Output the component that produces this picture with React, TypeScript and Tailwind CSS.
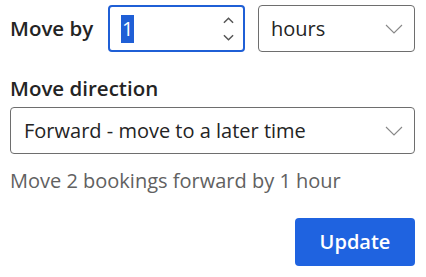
import { useState } from "react";

function Chevron({ className = "" }: { className?: string }) {
  return (
    <svg viewBox="0 0 18 10" className={className} fill="none" stroke="currentColor" strokeWidth="1.1">
      <path d="M1 1l8 8 8-8" />
    </svg>
  );
}

export default function App() {
  const [amount] = useState("1");
  return (
    <div className="w-[426px] h-[277px] bg-white text-[#242424] font-['Open_Sans',sans-serif] pl-[10px] pr-[11px] pt-[5px]">
      <div className="flex items-center">
        <span className="text-[20.5px] font-semibold w-[98px]">Move by</span>
        <div className="flex items-center w-[137px] h-[47px] rounded-[4px] border-2 border-[#1f5fd6] pl-[11px] pr-[9px]">
          <span className="bg-[#1f5fd6] text-white text-[20px] leading-[28px] px-[1px]">{amount}</span>
          <div className="ml-auto flex flex-col gap-[10px] text-[#555]">
            <svg viewBox="0 0 12 7" className="w-[11px] h-[7px]" fill="none" stroke="currentColor" strokeWidth="1.6"><path d="M1 6l5-5 5 5" /></svg>
            <svg viewBox="0 0 12 7" className="w-[11px] h-[7px]" fill="none" stroke="currentColor" strokeWidth="1.6"><path d="M1 1l5 5 5-5" /></svg>
          </div>
        </div>
        <div className="ml-[13px] flex-1 flex items-center h-[47px] rounded-[4px] border border-[#6e6e6e] pl-[12px] pr-[11px]">
          <span className="text-[20px]">hours</span>
          <Chevron className="ml-auto w-[18px] h-[10px] text-[#888]" />
        </div>
      </div>

      <div className="mt-[21px] text-[20.5px] font-semibold leading-[30px]">Move direction</div>
      <div className="mt-[4px] flex items-center h-[47px] rounded-[4px] border border-[#6e6e6e] pl-[13px] pr-[11px]">
        <span className="text-[20px]">Forward - move to a later time</span>
        <Chevron className="ml-auto w-[18px] h-[10px] text-[#888]" />
      </div>
      <div className="mt-[13px] text-[20px] leading-[28px] text-[#616161]">Move 2 bookings forward by 1 hour</div>

      <div className="mt-[23px] flex justify-end">
        <button className="w-[120px] h-[48px] rounded-[4px] bg-[#1f63e0] text-white text-[20px] font-semibold">Update</button>
      </div>
    </div>
  );
}
